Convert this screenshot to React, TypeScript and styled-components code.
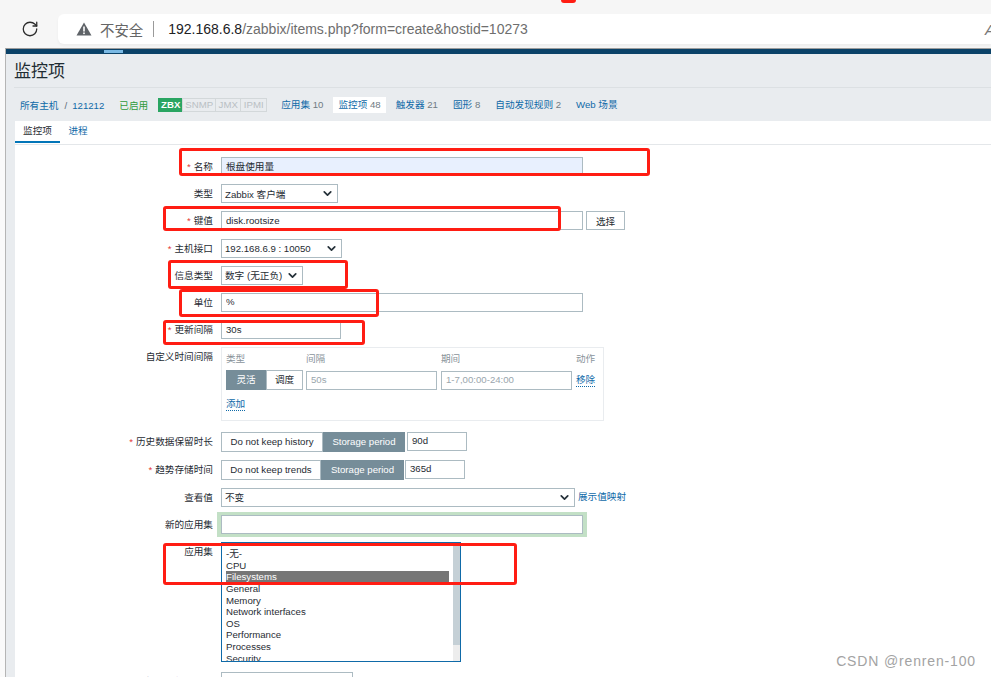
import React from "react";
import styled, { createGlobalStyle } from "styled-components";
import { ChevronDown, RotateCw } from "lucide-react";

const Global = createGlobalStyle`
  html, body { margin: 0; padding: 0; background: #fff; }
  * { box-sizing: border-box; }
  body { font-family: "Liberation Sans", "Noto Sans CJK SC", sans-serif; font-size: 9.65px; color: #1f2c33; }
`;

const Screen = styled.div`
  position: relative;
  width: 991px;
  height: 677px;
  overflow: hidden;
  background: #fafafa;
  display: flex;
  flex-direction: column;
`;

const Chrome = styled.header`
  height: 48px;
  flex: none;
  background: #f6f6f6;
  display: flex;
  align-items: flex-start;
  padding: 14px 0 0 21px;
`;
const Reload = styled.div`
  width: 18px;
  height: 30px;
  display: flex;
  align-items: center;
  color: #2c2c2c;
  margin-right: 19px;
`;
const Address = styled.div`
  flex: 1;
  height: 30px;
  background: #fff;
  border-radius: 6px 0 0 6px;
  display: flex;
  align-items: center;
  padding-left: 18px;
  font-size: 14px;
  color: #6e6e6e;
  white-space: nowrap;
  box-shadow: 0 2px 3px rgba(0,0,0,0.04);
`;
const Insecure = styled.span`
  margin-left: 8px;
  font-size: 14.4px;
  color: #666;
`;
const Divider = styled.span`
  width: 1px;
  height: 16px;
  background: #9a9a9a;
  margin: 0 14px 0 10px;
`;
const Host = styled.span`color: #202124;`;
const UrlEnd = styled.span`
  margin-left: auto;
  margin-right: -4px;
  font-style: italic;
  color: #777;
  font-size: 15px;
`;

const Page = styled.main`
  flex: 1;
  margin-left: 5px;
  border-left: 1px solid #b5b5b5;
  border-top: 1px solid #9c9c9c;
  background: #e9ecef;
`;
const TopBar = styled.div`
  position: relative;
  height: 5px;
  background: #0b4268;
`;
const TopMark = styled.span`
  position: absolute;
  left: 98px;
  top: 1px;
  width: 19px;
  height: 3px;
  background: #7ab9e4;
`;
const Header = styled.div`
  padding: 0 0 0 8px;
`;
const Title = styled.h1`
  margin: 0;
  height: 34px;
  font-size: 17px;
  font-weight: 400;
  line-height: 36px;
  color: #1f2c33;
  border-bottom: 1px solid #dce0e3;
`;
const Breadcrumbs = styled.nav`
  height: 33px;
  display: flex;
  align-items: center;
  padding-left: 6px;
  padding-top: 1px;
`;
const Crumb = styled.a`
  color: #0f6aa8;
  white-space: nowrap;
`;
const Sep = styled.span`
  color: #5a6a75;
  margin: 0 5px 0 6px;
`;
const Enabled = styled.span`
  color: #2f9a3c;
  margin: 0 10px 0 15px;
  white-space: nowrap;
`;
const Badges = styled.div`
  display: flex;
  margin-right: 15px;
`;
const Badge = styled.span<{ $on?: boolean; $w: number }>`
  width: ${(p) => p.$w}px;
  height: 14px;
  line-height: 12px;
  text-align: center;
  border: 1px solid ${(p) => (p.$on ? "#2aa562" : "#d3d8da")};
  margin-right: -1px;
  background: ${(p) => (p.$on ? "#2aa562" : "#e9ecef")};
  color: ${(p) => (p.$on ? "#fff" : "#b9c0c4")};
  font-weight: ${(p) => (p.$on ? 700 : 400)};
`;
const NavItem = styled.a<{ $active?: boolean; $gap: number }>`
  color: #0f6aa8;
  background: ${(p) => (p.$active ? "#fff" : "transparent")};
  padding: ${(p) => (p.$active ? "0 5px" : "0")};
  height: 16px;
  line-height: 16px;
  margin-right: ${(p) => p.$gap}px;
  white-space: nowrap;
`;
const Count = styled.span`color: #6f7b83;`;

const Panel = styled.section`
  background: #fff;
  margin-left: 9px;
  height: 560px;
`;
const Tabs = styled.div`
  height: 24px;
  display: flex;
  border-bottom: 1px solid #e4e7ea;
`;
const Tab = styled.a<{ $active?: boolean }>`
  width: ${(p) => (p.$active ? 45 : 36)}px;
  text-align: center;
  line-height: 20px;
  color: ${(p) => (p.$active ? "#1f2c33" : "#0f6aa8")};
  border-bottom: ${(p) => (p.$active ? "2px solid #0275b8" : "none")};
  height: 22px;
`;

const Form = styled.form`
  padding: 12px 0 0 0;
  display: flex;
  flex-direction: column;
  gap: 8.2px;
`;
const Row = styled.div<{ $after?: number }>`
  display: flex;
  margin-bottom: ${(p) => p.$after ?? 0}px;
`;
const Label = styled.label<{ $req?: boolean }>`
  width: 198px;
  flex: none;
  text-align: right;
  padding-top: 3px;
  margin-right: 8px;
  line-height: 13px;
  white-space: nowrap;
  color: #1f2c33;
  ${(p) => (p.$req ? `&::before { content: "*"; color: #e33734; margin-right: 3px; }` : "")}
`;
const Field = styled.div`
  display: flex;
  align-items: flex-start;
`;
const Input = styled.input<{ $w: number; $fill?: boolean }>`
  width: ${(p) => p.$w}px;
  height: 19px;
  border: 1px solid #acbbc2;
  background: ${(p) => (p.$fill ? "#e8f0fe" : "#fff")};
  font: inherit;
  color: #1f2c33;
  padding: 0 4px 1px;
  outline: none;
  &::placeholder { color: #9aa6ad; opacity: 1; }
`;
const Select = styled.div<{ $w: number }>`
  width: ${(p) => p.$w}px;
  height: 19px;
  border: 1px solid #acbbc2;
  background: #fff;
  display: flex;
  align-items: center;
  justify-content: space-between;
  padding: 0 3px 0 3px;
  white-space: nowrap;
  color: #1f2c33;
`;
const Button = styled.button`
  width: 39px;
  height: 19px;
  margin-left: 3px;
  border: 1px solid #acbbc2;
  background: #fff;
  font: inherit;
  color: #1f2c33;
  padding: 0;
`;
const Halo = styled.div`
  border-style: solid;
  border-color: #c3e0c6;
  border-width: 3px 4px;
  margin: -3px 0 -3px -4px;
  display: flex;
`;
const IntervalBox = styled.div`
  width: 383px;
  height: 74px;
  border: 1px solid #e9ecef;
  padding: 4px 4px 0 4px;
`;
const IntervalGrid = styled.div`
  display: grid;
  grid-template-columns: 80px 135px 135px auto;
  row-gap: 5px;
  align-items: center;
  color: #8a949b;
  line-height: 13px;
`;
const Remove = styled.a`
  color: #0f6aa8;
  border-bottom: 1px dotted #0f6aa8;
  width: fit-content;
  line-height: 12px;
`;
const Segment = styled.div`
  display: flex;
`;
const SegBtn = styled.span<{ $on?: boolean; $w: number; $h: number }>`
  width: ${(p) => p.$w}px;
  height: ${(p) => p.$h}px;
  line-height: ${(p) => p.$h - 2}px;
  text-align: center;
  white-space: nowrap;
  border: 1px solid ${(p) => (p.$on ? "#768d99" : "#acbbc2")};
  background: ${(p) => (p.$on ? "#768d99" : "#fff")};
  color: ${(p) => (p.$on ? "#fff" : "#1f2c33")};
`;
const AddLink = styled(Remove)`
  display: block;
  margin-top: 8px;
`;
const Gap = styled.span<{ $w: number }>`
  width: ${(p) => p.$w}px;
  flex: none;
`;
const Link = styled.a`
  color: #0f6aa8;
  margin-left: 3px;
  line-height: 18px;
  white-space: nowrap;
`;
const ListBox = styled.div`
  width: 240px;
  height: 120px;
  border: 1px solid #0f6aa8;
  position: relative;
  overflow: hidden;
  padding: 5px 0 0 4px;
`;
const Option = styled.div<{ $sel?: boolean }>`
  height: 11.6px;
  width: 223px;
  line-height: 11.6px;
  color: ${(p) => (p.$sel ? "#fff" : "#1f2c33")};
  background: ${(p) => (p.$sel ? "#767676" : "transparent")};
`;
const ScrollTrack = styled.div`
  position: absolute;
  right: 0;
  top: 0;
  bottom: 0;
  width: 7px;
  background: #ededed;
`;
const ScrollThumb = styled.div`
  height: 102px;
  background: #c5d0d6;
`;

const Callout = styled.div<{ $x: number; $y: number; $w: number; $h: number }>`
  position: absolute;
  left: ${(p) => p.$x}px;
  top: ${(p) => p.$y}px;
  width: ${(p) => p.$w}px;
  height: ${(p) => p.$h}px;
  border: 3px solid #ff1d13;
  border-radius: 3px;
  pointer-events: none;
`;
const Watermark = styled.div`
  position: absolute;
  right: 15px;
  top: 653px;
  font-family: "Liberation Sans", sans-serif;
  font-size: 14px;
  letter-spacing: 0.85px;
  color: #a3a3a3;
`;
const Chevron = () => <ChevronDown size={13} strokeWidth={3.2} color="#26323a" />;

const nav: [string, string, number, boolean?][] = [
  ["应用集", " 10", 10, false],
  ["监控项", " 48", 10, true],
  ["触发器", " 21", 15, false],
  ["图形", " 8", 15, false],
  ["自动发现规则", " 2", 15, false],
];
const options = ["-无-", "CPU", "Filesystems", "General", "Memory", "Network interfaces", "OS", "Performance", "Processes", "Security"];
const callouts = [
  [179, 148, 471, 28],
  [163, 206, 398, 25],
  [168, 260, 180, 29],
  [179, 289, 200, 28],
  [163, 320, 202, 25],
  [163, 543, 354, 42],
];

export default function App() {
  return (
    <Screen>
      <Global />
      <Chrome>
        <Reload><RotateCw size={18} strokeWidth={1.7} /></Reload>
        <Address>
          <svg width="16" height="14" viewBox="0 0 16 14" aria-hidden="true">
            <path d="M8 0.5 L15.5 13.5 H0.5 Z" fill="#5f6368" />
            <rect x="7.2" y="4.5" width="1.6" height="5" fill="#fff" />
            <rect x="7.2" y="10.5" width="1.6" height="1.6" fill="#fff" />
          </svg>
          <Insecure>不安全</Insecure>
          <Divider />
          <Host>192.168.6.8</Host>/zabbix/items.php?form=create&amp;hostid=10273
          <UrlEnd>A</UrlEnd>
        </Address>
      </Chrome>
      <Page>
        <TopBar><TopMark /></TopBar>
        <Header>
          <Title>监控项</Title>
          <Breadcrumbs>
            <Crumb>所有主机</Crumb>
            <Sep>/</Sep>
            <Crumb>121212</Crumb>
            <Enabled>已启用</Enabled>
            <Badges>
              <Badge $on $w={25}>ZBX</Badge>
              <Badge $w={34}>SNMP</Badge>
              <Badge $w={26}>JMX</Badge>
              <Badge $w={27}>IPMI</Badge>
            </Badges>
            {nav.map(([t, c, g, a]) => (
              <NavItem key={t} $gap={g} $active={a}>{t}<Count>{c}</Count></NavItem>
            ))}
            <NavItem $gap={0}>Web 场景</NavItem>
          </Breadcrumbs>
        </Header>
        <Panel>
          <Tabs>
            <Tab $active>监控项</Tab>
            <Tab>进程</Tab>
          </Tabs>
          <Form>
            <Row><Label $req>名称</Label><Field><Input $w={362} $fill readOnly value="根盘使用量" /></Field></Row>
            <Row><Label>类型</Label><Field><Select $w={117}>Zabbix 客户端<Chevron /></Select></Field></Row>
            <Row><Label $req>键值</Label><Field><Input $w={362} readOnly value="disk.rootsize" /><Button type="button">选择</Button></Field></Row>
            <Row><Label $req>主机接口</Label><Field><Select $w={121}>192.168.6.9 : 10050<Chevron /></Select></Field></Row>
            <Row><Label>信息类型</Label><Field><Select $w={82}>数字 (无正负)<Chevron /></Select></Field></Row>
            <Row><Label>单位</Label><Field><Input $w={362} readOnly value="%" /></Field></Row>
            <Row><Label $req>更新间隔</Label><Field><Input $w={120} readOnly value="30s" /></Field></Row>
            <Row $after={2}>
              <Label>自定义时间间隔</Label>
              <Field>
                <IntervalBox>
                  <IntervalGrid>
                    <span>类型</span><span>间隔</span><span>期间</span><span>动作</span>
                    <Segment>
                      <SegBtn $on $w={40} $h={20}>灵活</SegBtn>
                      <SegBtn $w={37} $h={20}>调度</SegBtn>
                    </Segment>
                    <Input $w={131} readOnly placeholder="50s" />
                    <Input $w={131} readOnly placeholder="1-7,00:00-24:00" />
                    <Remove>移除</Remove>
                  </IntervalGrid>
                  <AddLink>添加</AddLink>
                </IntervalBox>
              </Field>
            </Row>
            <Row>
              <Label $req>历史数据保留时长</Label>
              <Field>
                <SegBtn $w={102} $h={20}>Do not keep history</SegBtn>
                <SegBtn $on $w={82} $h={20}>Storage period</SegBtn>
                <Gap $w={2} />
                <Input $w={60} readOnly value="90d" />
              </Field>
            </Row>
            <Row>
              <Label $req>趋势存储时间</Label>
              <Field>
                <SegBtn $w={100} $h={20}>Do not keep trends</SegBtn>
                <SegBtn $on $w={83} $h={20}>Storage period</SegBtn>
                <Gap $w={1} />
                <Input $w={60} readOnly value="365d" />
              </Field>
            </Row>
            <Row>
              <Label>查看值</Label>
              <Field><Select $w={354}>不变<Chevron /></Select><Link>展示值映射</Link></Field>
            </Row>
            <Row>
              <Label>新的应用集</Label>
              <Field><Halo><Input $w={362} readOnly /></Halo></Field>
            </Row>
            <Row $after={2}>
              <Label>应用集</Label>
              <Field>
                <ListBox>
                  {options.map((o) => <Option key={o} $sel={o === "Filesystems"}>{o}</Option>)}
                  <ScrollTrack><ScrollThumb /></ScrollTrack>
                </ListBox>
              </Field>
            </Row>
            <Row>
              <Label>主机资产纪录栏位</Label>
              <Field><Select $w={132}>-无-<Chevron /></Select></Field>
            </Row>
          </Form>
        </Panel>
      </Page>
      {callouts.map(([x, y, w, h]) => <Callout key={`${x}-${y}`} $x={x} $y={y} $w={w} $h={h} />)}
      <Callout $x={561} $y={-3} $w={15} $h={5} />
      <Watermark>CSDN @renren-100</Watermark>
    </Screen>
  );
}
